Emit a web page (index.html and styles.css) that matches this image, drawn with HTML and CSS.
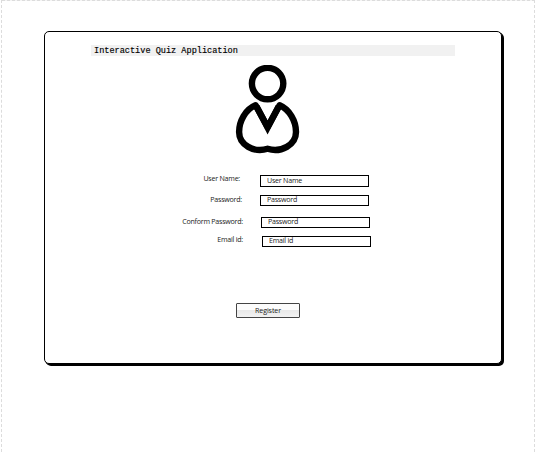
FILE: index.html
```html
<!DOCTYPE html>
<html lang="en">
<head>
<meta charset="utf-8">
<title>Interactive Quiz Application</title>
<link rel="stylesheet" href="styles.css">
</head>
<body>
<div class="page">
  <main class="card">
    <h1 class="title">Interactive Quiz Application</h1>
    <svg class="avatar" viewBox="0 0 66 90" aria-hidden="true">
      <circle cx="32.6" cy="18.6" r="15.7"/>
      <path d="M20.6 40.3L32.6 62L44.6 40.3C54.5 44.5 61 56 61 67C61 80 46 88 32.6 83.8C19 88 4.1 80 4.1 67C4.1 56 10.5 44.5 20.6 40.3Z"/>
      <path class="collar" d="M21.6 41.5L32.6 62.5L43.6 41.5"/>
    </svg>
    <form class="form">
      <div class="row row-user"><label class="label">User Name:</label><div class="field"><span>User Name</span></div></div>
      <div class="row row-password"><label class="label">Password:</label><div class="field"><span>Password</span></div></div>
      <div class="row row-confirm"><label class="label">Conform Password:</label><div class="field"><span>Password</span></div></div>
      <div class="row row-email"><label class="label">Email id:</label><div class="field"><span>Email id</span></div></div>
      <button class="register" type="button">Register</button>
    </form>
  </main>
</div>
</body>
</html>
```
FILE: styles.css
```css
* { box-sizing: border-box; }
body { margin: 0; background: #fff; }
.page {
  width: 534px;
  height: 452px;
  margin-left: 1px;
  padding: 31px 0 0 42px;
  border: 1px dashed #dcdcdc;
  border-width: 0 1px;
  background: repeating-linear-gradient(90deg, #dcdcdc 0 3px, #f4f4f4 3px 5px) top / 100% 1px no-repeat;
  overflow: hidden;
}
.card {
  width: 458px;
  height: 333px;
  border: 1px solid #000;
  border-radius: 5px;
  box-shadow: 1px 1px 0 #000, 2px 2px 0 #000;
  background: #fff;
  display: flex;
  flex-direction: column;
}
.title {
  width: 364px;
  height: 11px;
  margin: 13px 0 0 46px;
  padding: 1px 0 0 3px;
  background: #f1f1f1;
  font: 400 8.57px/10px "Courier New", "Liberation Mono", monospace;
  -webkit-text-stroke: 0.15px #000;
  color: #000;
}
.avatar {
  width: 66px;
  height: 90px;
  margin: 9px 0 0 190px;
  fill: none;
  stroke: #000;
  stroke-width: 6.4;
  stroke-linejoin: round;
}
.collar { stroke-linejoin: miter; }
.form {
  margin-top: 20px;
  font: 7.1px/10px "Open Sans", "Noto Sans", sans-serif;
  letter-spacing: -0.24px;
  color: #222;
}
.row { display: flex; align-items: flex-start; }
.label { text-align: right; white-space: nowrap; margin-top: -1px; }
.field {
  width: 109px;
  height: 11px;
  padding-left: 6px;
  border: 1px solid #000;
  line-height: 7px;
}
.row-user .label { width: 195px; margin-top: -2px; }
.row-user .field { height: 12px; margin-left: 20px; line-height: 8px; }
.row-password { margin-top: 8px; }
.row-password .label { width: 197px; }
.row-password .field { margin-left: 18px; }
.row-confirm { margin-top: 11px; }
.row-confirm .label { width: 198px; }
.row-confirm .field { margin-left: 18px; }
.row-email { margin-top: 8px; }
.row-email .label { width: 198px; margin-top: -2px; }
.row-email .field { margin-left: 19px; }
.register {
  display: block;
  width: 64px;
  height: 15px;
  margin: 56px 0 0 191px;
  padding: 0 0 2px;
  border: 1px solid #444;
  border-radius: 1px;
  background: linear-gradient(#fcfcfc 49%, #e9e9e9 50%, #f2f2f2);
  color: #222;
  font: inherit;
  letter-spacing: -0.1px;
}
```
